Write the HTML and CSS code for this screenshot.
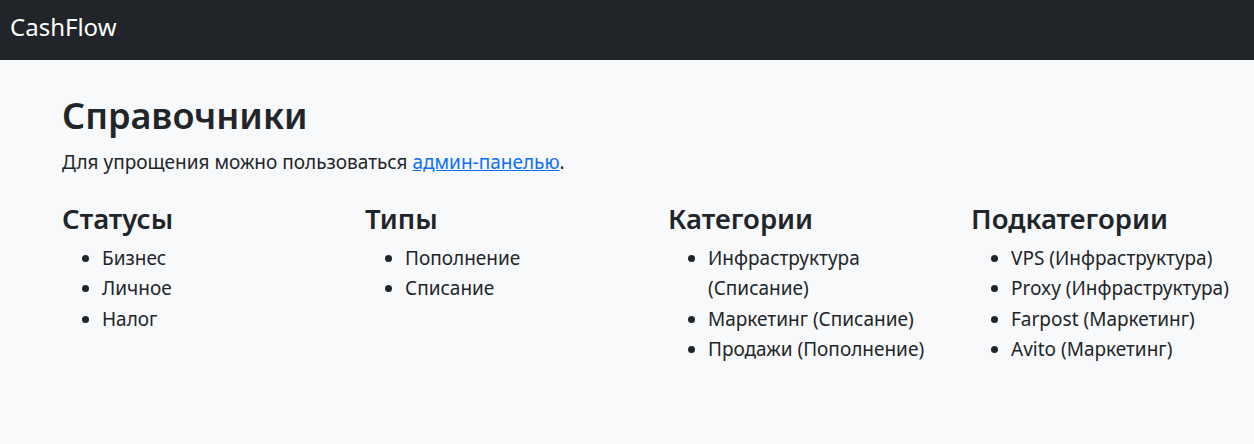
FILE: index.html
```html
<!DOCTYPE html>
<html lang="ru">
<head>
<meta charset="utf-8">
<title>CashFlow</title>
<link rel="stylesheet" href="styles.css">
</head>
<body>
<nav class="navbar">
  <a class="brand" href="#">CashFlow</a>
</nav>
<main class="container">
  <h1 class="title">Справочники</h1>
  <p class="lead">Для упрощения можно пользоваться <a href="#" class="link">админ-панелью</a>.</p>
  <div class="grid">
    <section class="col">
      <h3 class="col-title">Статусы</h3>
      <ul class="list">
        <li>Бизнес</li>
        <li>Личное</li>
        <li>Налог</li>
      </ul>
    </section>
    <section class="col">
      <h3 class="col-title">Типы</h3>
      <ul class="list">
        <li>Пополнение</li>
        <li>Списание</li>
      </ul>
    </section>
    <section class="col">
      <h3 class="col-title">Категории</h3>
      <ul class="list">
        <li>Инфраструктура (Списание)</li>
        <li>Маркетинг (Списание)</li>
        <li>Продажи (Пополнение)</li>
      </ul>
    </section>
    <section class="col">
      <h3 class="col-title">Подкатегории</h3>
      <ul class="list">
        <li>VPS (Инфраструктура)</li>
        <li>Proxy (Инфраструктура)</li>
        <li>Farpost (Маркетинг)</li>
        <li>Avito (Маркетинг)</li>
      </ul>
    </section>
  </div>
</main>
</body>
</html>
```
FILE: styles.css
```css
html, body {
  margin: 0;
  padding: 0;
}
body {
  background: #f8f9fa;
  color: #212529;
  font-family: "Noto Sans", "Open Sans", sans-serif;
  font-size: 19px;
  line-height: 30.5px;
}
.navbar {
  height: 60px;
  background: #212529;
  display: flex;
  align-items: center;
  padding: 0 10px;
}
.brand {
  color: #ffffff;
  text-decoration: none;
  font-size: 24px;
  line-height: 1;
  margin-top: -6px;
}
.container {
  padding: 34px 4px 0 62px;
}
.title {
  margin: 0 0 10px 0;
  font-size: 36px;
  font-weight: 600;
  line-height: 1.2;
}
.lead {
  margin: 0 0 24px 0;
}
.link {
  color: #0d6efd;
  text-decoration: underline;
}
.grid {
  display: grid;
  grid-template-columns: repeat(4, 279px);
  column-gap: 24px;
}
.col-title {
  margin: 0 0 8px 0;
  font-size: 27.5px;
  font-weight: 600;
  line-height: 1.2;
}
.list {
  margin: 0;
  padding-left: 40px;
}
.list li {
  line-height: 30.5px;
}
```
